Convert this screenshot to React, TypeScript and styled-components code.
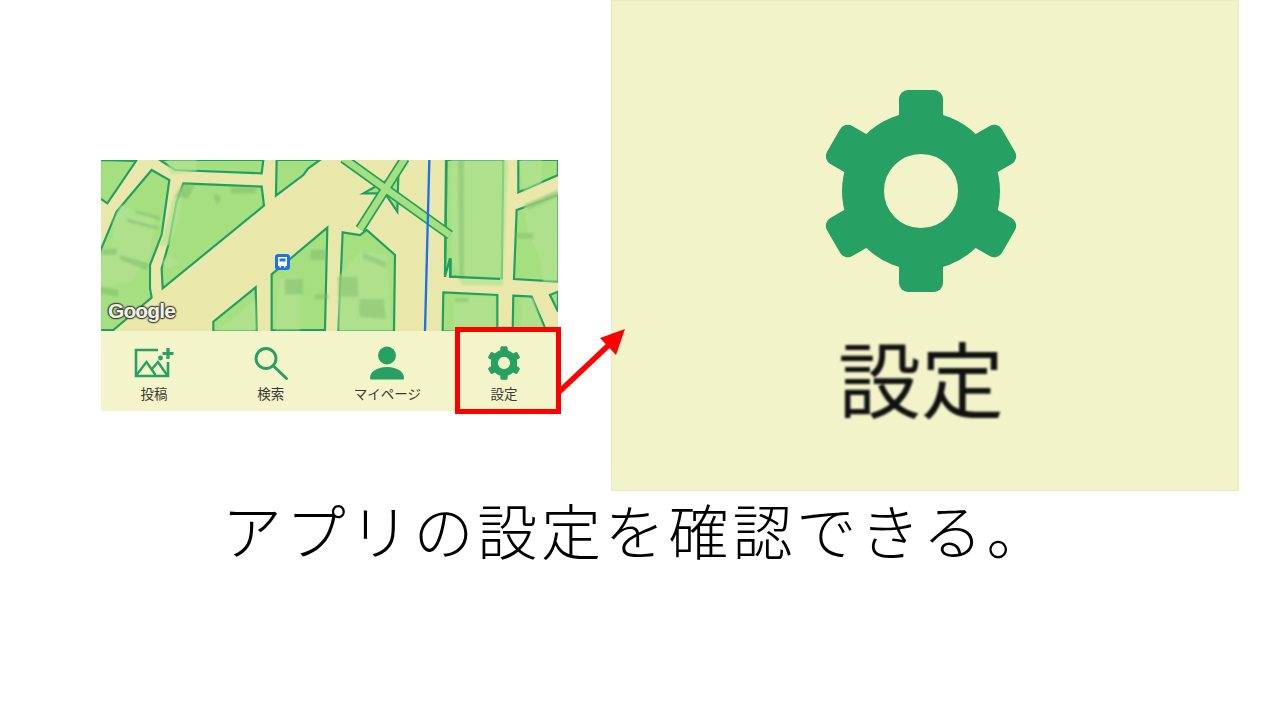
import styled, { createGlobalStyle } from "styled-components"

const Global = createGlobalStyle`
  html, body {
    margin: 0;
    background: #fff;
  }
  body {
    font-family: "Noto Sans CJK JP", "Liberation Sans", sans-serif;
  }
`

const Slide = styled.div`
  position: relative;
  width: 1280px;
  height: 720px;
  overflow: hidden;
  background: #fff;
`

const TopRow = styled.div`
  display: flex;
  align-items: flex-start;
  gap: 53px;
  padding-left: 101px;
`

const Phone = styled.div`
  width: 457px;
  margin-top: 160px;
`

const MapArea = styled.div`
  position: relative;
  height: 171px;
  overflow: hidden;
  background: #e9e7a9;

  svg {
    display: block;
  }
`

const SoftShade = styled.g`
  filter: blur(3px);
`

const GoogleMark = styled.span`
  position: absolute;
  left: 7px;
  bottom: 8px;
  font-family: "Liberation Sans", sans-serif;
  font-size: 21px;
  line-height: 24px;
  letter-spacing: -0.9px;
  font-weight: 700;
  color: #f1f1ea;
  text-shadow: 0 0 2px #3f3f35, 0 0 2px #3f3f35, 1px 0 1px #3f3f35, -1px 0 1px #3f3f35, 0 1px 1px #3f3f35, 0 -1px 1px #3f3f35;
`

const NavBar = styled.nav`
  display: flex;
  gap: 36.67px;
  height: 80px;
  padding: 14px 0 0 13px;
  box-sizing: border-box;
  background: #f3f4c9;
`

const NavItem = styled.div`
  display: flex;
  flex-direction: column;
  align-items: center;
  width: 80px;
`

const IconSlot = styled.div`
  display: flex;
  align-items: center;
  justify-content: center;
  height: 36px;
`

const NavLabel = styled.span`
  margin-top: 3px;
  font-size: 13.5px;
  line-height: 18px;
  color: #3a3a34;
  white-space: nowrap;
`

const ZoomPanel = styled.section`
  display: flex;
  flex-direction: column;
  align-items: center;
  width: 628px;
  height: 491px;
  padding: 89px 8px 0 0;
  box-sizing: border-box;
  background: #f2f3c8;
  box-shadow: inset 0 0 2px #d8dcae;
`

const ZoomLabel = styled.span`
  margin-top: 31px;
  font-size: 83px;
  line-height: 104px;
  color: #111;
  filter: blur(0.9px);
`

const Caption = styled.p`
  margin: -1px 0 0 222px;
  font-size: 60px;
  line-height: 78px;
  letter-spacing: 3.8px;
  font-weight: 300;
  color: #000;
  white-space: nowrap;
`

const Highlight = styled.div`
  position: absolute;
  left: 455px;
  top: 327px;
  width: 106px;
  height: 87px;
  box-sizing: border-box;
  border: 5.5px solid #ff0000;
`

const Arrow = styled.svg`
  position: absolute;
  left: 550px;
  top: 320px;
`

function Gear({ size, color = "#27a063" }: { size: number; color?: string }) {
  return (
    <svg width={size} height={size} viewBox="-102 -102 204 204">
      <circle r="58" fill="none" stroke={color} strokeWidth="42" />
      {[0, 60, 120, 180, 240, 300].map(a => (
        <rect key={a} x="-22" y="-101" width="44" height="40" rx="9" fill={color} transform={`rotate(${a})`} />
      ))}
    </svg>
  )
}

function PhotoIcon() {
  return (
    <svg width="40" height="30" viewBox="0 0 40 30" fill="none" stroke="#27a063">
      <path d="M24 2H2v26h32V14" strokeWidth="2.600" />
      <path d="M2.500 27l10-13 9 13M18 21l6-7 9 13" strokeWidth="2.400" />
      <circle cx="26.500" cy="10" r="2.400" fill="#27a063" stroke="none" />
      <path d="M34 0v11M28.500 5.500h11" strokeWidth="3.200" />
    </svg>
  )
}

function SearchIcon() {
  return (
    <svg width="36" height="34" viewBox="0 0 36 34" fill="none" stroke="#27a063" strokeWidth="2.900">
      <circle cx="13" cy="12.500" r="10" />
      <path d="M20.500 20l13 12.500" strokeLinecap="round" />
    </svg>
  )
}

function PersonIcon() {
  return (
    <svg width="36" height="34" viewBox="0 0 36 34" fill="#27a063">
      <circle cx="18" cy="9.500" r="9" />
      <path d="M1 32c0-7 8-11 17-11s17 4 17 11c0 1-.5 1.500-1.500 1.500h-31C1.500 33.500 1 33 1 32z" />
    </svg>
  )
}

// block outlines, measured from the 3x crops
const leftBlocks = [
  "0,130 22,145 108,18 0,15",
  "155,45 208,75 185,240 150,330 150,400 155,428 40,525 0,525 0,290 50,170",
  "250,85 485,95 492,152 188,400 185,340 205,270 230,140",
  "180,15 225,45 485,55 490,15",
  "528,122 610,60 625,40 660,15 530,15",
  "682,218 515,358 515,525 675,525",
  "467,397 340,500 340,530 470,530",
]

const rightBlocks = [
  "68,232 120,240 140,225 225,300 222,530 55,530",
  "380,15 550,15 545,370 390,365 390,310 375,365",
  "595,15 714,15 714,60 595,112",
  "590,165 714,120 714,380 582,372",
  "370,412 532,420 532,530 368,530",
  "580,422 635,425 680,530 578,530",
  "690,420 714,410 714,470",
]

// pale building sides that spill over the outlines
const leftPale = [
  "178,275 222,125 250,85 240,170 208,270",
  "212,58 290,48 290,15 200,15",
  "40,200 62,150 165,190 150,300 90,380 30,385",
  "5,295 48,285 45,395 0,390",
  "185,325 205,300 240,325 205,340",
  "355,525 415,480 465,430 470,525",
  "540,370 600,370 600,525 525,525",
]

const rightPale = [
  "392,15 565,15 548,392 425,390 395,310",
  "612,150 714,108 714,380 670,380 660,310 625,230",
  "55,366 125,290 200,300 215,525 55,525",
  "600,15 665,15 665,85 610,108",
  "402,425 525,425 525,525 402,525",
  "605,430 640,430 670,525 605,525",
]

const leftShades = [
  "225,125 250,85 285,90 265,130",
  "395,95 470,95 465,115 390,115",
  "60,300 145,325 140,345 60,315",
  "80,190 175,215 175,225 80,200",
  "105,165 180,185 180,195 105,175",
  "5,285 50,280 50,300 5,300",
  "340,120 355,118 362,135 350,148",
  "555,372 608,372 608,418 555,418",
  "632,285 678,285 678,315 632,315",
  "645,418 685,418 685,432 645,432",
  "0,395 55,405 55,425 0,415",
]

const rightShades = [
  "128,292 198,322 198,340 128,308",
  "55,366 112,366 115,425 55,425",
  "118,432 190,432 198,492 118,485",
  "414,15 432,15 432,370 418,370",
  "590,235 640,235 640,250 590,250",
  "405,428 445,428 445,442 405,442",
  "612,150 714,105 714,125 625,165",
]

export default function App() {
  return (
    <Slide>
      <Global />
      <TopRow>
        <Phone>
          <MapArea>
            <svg width="457" height="171" viewBox="0 0 457 171">
              <g transform="translate(-1,-5) scale(.3333)" fill="#a5df80" stroke="#1fa060" strokeWidth="6.500">
                {leftBlocks.map(p => <polygon key={p} points={p} />)}
                <SoftShade fill="#b4e393" stroke="none" opacity=".7">
                  {leftPale.map(p => <polygon key={p} points={p} />)}
                </SoftShade>
                <SoftShade fill="#7fb868" stroke="none" opacity=".5">
                  {leftShades.map(p => <polygon key={p} points={p} />)}
                </SoftShade>
              </g>
              <g transform="translate(219,-5) scale(.3333)" fill="#a5df80" stroke="#1fa060" strokeWidth="6.500">
                {rightBlocks.map(p => <polygon key={p} points={p} />)}
                <SoftShade fill="#b4e393" stroke="none" opacity=".7">
                  {rightPale.map(p => <polygon key={p} points={p} />)}
                </SoftShade>
                <SoftShade fill="#7fb868" stroke="none" opacity=".45">
                  {rightShades.map(p => <polygon key={p} points={p} />)}
                </SoftShade>
                <path d="M378 15L375 365M392 310V365L540 372" fill="none" />
                <polygon points="130,115 175,90 235,60 232,170 195,115" />
                <path d="M70 10L390 240M255 10L120 222" fill="none" stroke="#1fa060" strokeWidth="30" />
                <path d="M70 10L390 240M255 10L120 222" fill="none" stroke="#a5df80" strokeWidth="20" />
                <path d="M328 15L315 530" fill="none" stroke="#1f6fe8" strokeWidth="7" />
              </g>
              <rect x="174" y="94" width="15" height="16" rx="3" fill="#1a73e8" />
              <path d="M177 97h9v9h-1.500v1.500h-1.500V106h-3v1.500h-1.500V106H177z" fill="#fff" />
              <rect x="178.500" y="98.500" width="6" height="3" fill="#1a73e8" />
            </svg>
            <GoogleMark>Google</GoogleMark>
          </MapArea>
          <NavBar>
            <NavItem>
              <IconSlot><PhotoIcon /></IconSlot>
              <NavLabel>投稿</NavLabel>
            </NavItem>
            <NavItem>
              <IconSlot><SearchIcon /></IconSlot>
              <NavLabel>検索</NavLabel>
            </NavItem>
            <NavItem>
              <IconSlot><PersonIcon /></IconSlot>
              <NavLabel>マイページ</NavLabel>
            </NavItem>
            <NavItem>
              <IconSlot><Gear size={34} /></IconSlot>
              <NavLabel>設定</NavLabel>
            </NavItem>
          </NavBar>
        </Phone>
        <ZoomPanel>
          <Gear size={204} />
          <ZoomLabel>設定</ZoomLabel>
        </ZoomPanel>
      </TopRow>
      <Caption>アプリの設定を確認できる。</Caption>
      <Highlight />
      <Arrow width="80" height="80" viewBox="0 0 80 80">
        <path d="M9 72L62 22" stroke="#ff0000" strokeWidth="5.500" fill="none" />
        <polygon points="75,9 66,35 50,18" fill="#ff0000" />
      </Arrow>
    </Slide>
  )
}
